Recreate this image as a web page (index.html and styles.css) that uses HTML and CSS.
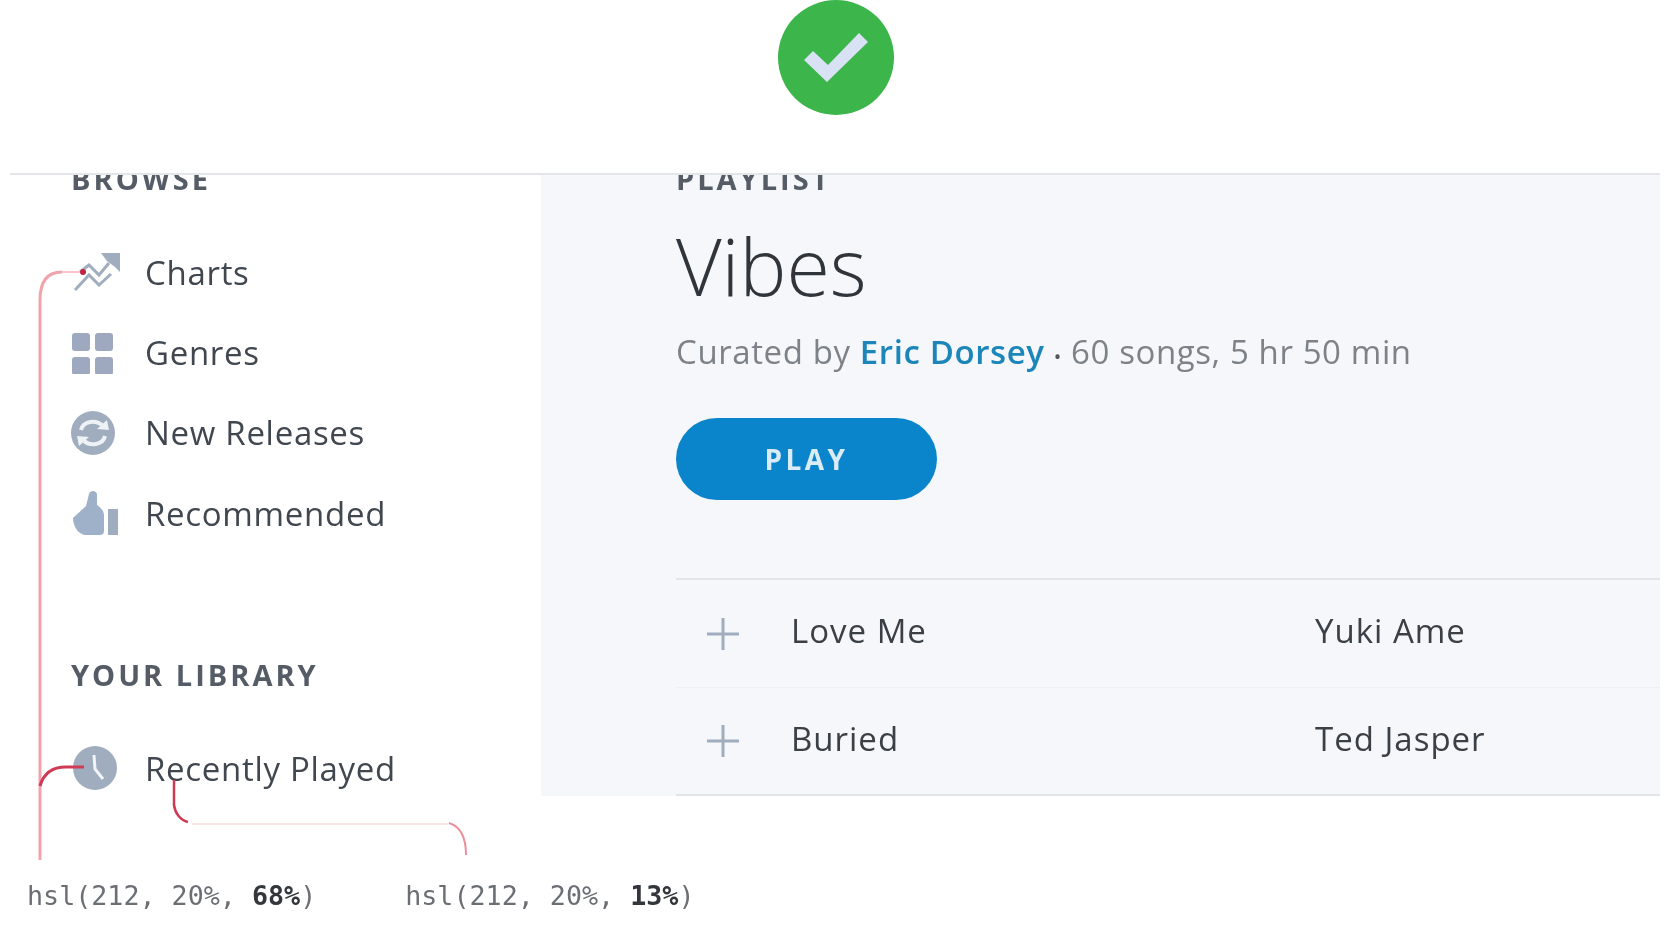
FILE: index.html
```html
<!DOCTYPE html>
<html lang="en">
<head>
    <meta charset="UTF-8">
    <title>Vibes</title>
    <link rel="stylesheet" href="styles.css">
</head>
<body>
    <div class="page">
        <div class="top">
            <svg class="check" viewBox="0 0 116 115">
                <ellipse cx="58" cy="57.5" rx="58" ry="57.5" fill="#3cb54a"/>
                <polygon points="81,33 90,42 49,82 26,60 35,51 50,65" fill="#d9e1f4"/>
            </svg>
        </div>
        <div class="frame">
            <div class="sidebar">
                <h4 class="label">BROWSE</h4>
                <ul class="nav">
                    <li>
                        <svg class="icon" viewBox="0 0 50 44">
                            <path d="M9 22 L18 15 L28 25 L38 13" fill="none" stroke="#9fadbe" stroke-width="3"/>
                            <path d="M4 40 L18 25 L28 35 L40 24" fill="none" stroke="#9fadbe" stroke-width="3"/>
                            <polygon points="30,3 49,3 49,22 44,17 36,11" fill="#9fadbe"/>
                        </svg>
                        Charts
                    </li>
                    <li>
                        <svg class="icon" viewBox="0 0 50 44">
                            <rect x="1" y="3" width="18" height="18" rx="3" fill="#9ea9c0"/>
                            <rect x="24" y="3" width="18" height="18" rx="3" fill="#9ea9c0"/>
                            <rect x="1" y="27" width="18" height="18" rx="3" fill="#9ea9c0"/>
                            <rect x="24" y="27" width="18" height="18" rx="3" fill="#9ea9c0"/>
                        </svg>
                        Genres
                    </li>
                    <li>
                        <svg class="icon" viewBox="0 0 50 44">
                            <circle cx="22" cy="22" r="22" fill="#9fadbe"/>
                            <path d="M10 19 C12 10 25 8 32 15" fill="none" stroke="#eef1f5" stroke-width="4"/>
                            <polygon points="26,18 38,19 36,9" fill="#eef1f5"/>
                            <path d="M34 25 C32 34 19 36 12 29" fill="none" stroke="#eef1f5" stroke-width="4"/>
                            <polygon points="18,26 6,25 8,35" fill="#eef1f5"/>
                        </svg>
                        New Releases
                    </li>
                    <li>
                        <svg class="icon" viewBox="0 0 50 44">
                            <path d="M2 27 L15 15 L18 3 C19 -1 25 -1 26 3 L26 14 C30 17 33 20 33 24 L33 40 C33 43 31 44 29 44 L15 44 C8 44 2 36 2 27 Z" fill="#9fb1c8"/>
                            <rect x="37" y="18" width="10" height="27" fill="#9fadbe"/>
                        </svg>
                        Recommended
                    </li>
                </ul>
                <h4 class="label library">YOUR LIBRARY</h4>
                <ul class="nav">
                    <li>
                        <svg class="icon" viewBox="0 0 50 44">
                            <circle cx="24" cy="22" r="22" fill="#9fadbe"/>
                            <path d="M23 9 L24 23 L32 33" fill="none" stroke="#f2f4f7" stroke-width="3"/>
                        </svg>
                        Recently Played
                    </li>
                </ul>
            </div>
            <div class="main">
                <h4 class="label">PLAYLIST</h4>
                <h1 class="title">Vibes</h1>
                <p class="meta">Curated by <a href="#">Eric Dorsey</a> <span class="dot">•</span> 60 songs, 5 hr 50 min</p>
                <button class="play" type="button">PLAY</button>
                <div class="tracks">
                    <div class="track">
                        <svg class="add" viewBox="0 0 32 32"><path d="M16 0 V32 M0 16 H32" stroke="#9fadbe" stroke-width="3"/></svg>
                        <span class="name">Love Me</span>
                        <span>Yuki Ame</span>
                    </div>
                    <div class="track">
                        <svg class="add" viewBox="0 0 32 32"><path d="M16 0 V32 M0 16 H32" stroke="#9fadbe" stroke-width="3"/></svg>
                        <span class="name">Buried</span>
                        <span>Ted Jasper</span>
                    </div>
                </div>
            </div>
        </div>
        <div class="notes">
            <code>hsl(212, 20%, <b>68%</b>)</code>
            <code>hsl(212, 20%, <b>13%</b>)</code>
        </div>
        <!-- red callout lines drawn over the mockup -->
        <svg class="callouts" viewBox="0 0 1674 925">
            <path d="M40 860 L40 300 C40 280 48 272 62 272" fill="none" stroke="#f0a3ab" stroke-width="3"/>
            <path d="M62 272 L84 272" fill="none" stroke="#f6c4c9" stroke-width="2"/>
            <circle cx="83" cy="272" r="3" fill="#c2233f"/>
            <path d="M40 786 C44 772 54 767 66 767 L84 767" fill="none" stroke="#cf3a54" stroke-width="3"/>
            <path d="M174 780 L174 805 C175 813 180 820 188 822" fill="none" stroke="#cf3a54" stroke-width="2.5"/>
            <path d="M192 824 L448 824" fill="none" stroke="#fbe6e8" stroke-width="2"/>
            <path d="M449 823 C459 826 466 834 466 855" fill="none" stroke="#eb8f9b" stroke-width="2"/>
        </svg>
    </div>
</body>
</html>
```

FILE: styles.css
```css
body {
    margin: 0;
    background-color: #fff;
    font-family: "Open Sans", "Noto Sans", sans-serif;
}
.page {
    position: relative;
    height: 925px;
    overflow: hidden;
}
.top {
    height: 173px;
    padding-left: 778px;
}
.check {
    display: block;
    width: 116px;
    height: 115px;
}
.frame {
    display: flex;
    height: 621px;
    margin: 0 14px 0 10px;
    border-top: 2px solid #e3e5e8;
    overflow: hidden;
    filter: blur(0.7px);
}
.sidebar {
    width: 531px;
    flex: none;
    padding-left: 61px;
    box-sizing: border-box;
}
.label {
    margin: -14px 0 0;
    font-size: 29px;
    line-height: 36px;
    font-weight: 700;
    letter-spacing: 3px;
    color: #555c66;
}
.label.library {
    margin-top: 104px;
}
.nav {
    list-style: none;
    margin: 35px 0 0;
    padding: 0;
}
.nav li {
    display: flex;
    align-items: center;
    height: 80.3px;
    font-size: 33px;
    letter-spacing: 0.7px;
    color: #41474f;
}
.icon {
    width: 50px;
    height: 44px;
    margin-right: 24px;
    flex: none;
}
.main {
    flex: 1;
    padding-left: 135px;
    background-color: #f5f7fa;
}
.title {
    margin: 24px 0 0;
    font-size: 79px;
    line-height: 90px;
    font-weight: 300;
    color: #30353b;
}
.meta {
    margin: 19px 0 0;
    font-size: 33px;
    line-height: 44px;
    letter-spacing: 0.6px;
    color: #7d8289;
}
.meta a {
    color: #1c86bb;
    font-weight: 600;
    text-decoration: none;
}
.dot {
    color: #555;
    font-size: 20px;
}
.play {
    display: block;
    width: 261px;
    height: 82px;
    margin-top: 39px;
    border: none;
    border-radius: 41px;
    background-color: #0a85cb;
    color: #dcecf6;
    font-family: inherit;
    font-size: 28px;
    font-weight: 700;
    letter-spacing: 3.5px;
}
.tracks {
    margin-top: 78px;
    border-top: 2px solid #e3e5e8;
    border-bottom: 2px solid #e3e5e8;
}
.track {
    display: flex;
    align-items: center;
    height: 107px;
    font-size: 33px;
    letter-spacing: 1px;
    color: #3b4047;
}
.track span {
    position: relative;
    top: -3px;
}
.track + .track {
    height: 106px;
    border-top: 1px solid #eef0f3;
}
.add {
    width: 32px;
    height: 32px;
    margin: 0 52px 0 31px;
    flex: none;
}
.name {
    width: 524px;
}
.notes {
    display: flex;
    gap: 89px;
    margin-top: 84px;
    padding-left: 27px;
    filter: blur(0.7px);
}
.notes code {
    font-family: "DejaVu Sans Mono", monospace;
    font-size: 26.7px;
    color: #6b6f74;
}
.notes b {
    color: #33373b;
}
.callouts {
    position: absolute;
    left: 0;
    top: 0;
    width: 1674px;
    height: 925px;
    pointer-events: none;
    filter: blur(0.5px);
}
```
